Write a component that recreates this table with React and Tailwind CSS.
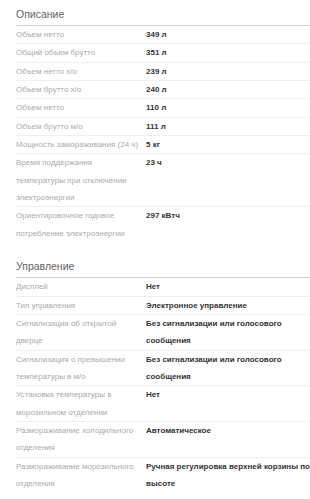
const description = [
  ['Объем нетто', '349 л'],
  ['Общий объем брутто', '351 л'],
  ['Объем нетто х/о', '239 л'],
  ['Объем брутто х/о', '240 л'],
  ['Объем нетто', '110 л'],
  ['Объем брутто м/о', '111 л'],
  ['Мощность замораживания (24 ч)', '5 кг'],
  ['Время поддержания температуры при отключении электроэнергии', '23 ч'],
  ['Ориентировочное годовое потребление электроэнергии', '297 кВтч'],
];

const control = [
  ['Дисплей', 'Нет'],
  ['Тип управления', 'Электронное управление'],
  ['Сигнализация об открытой дверце', 'Без сигнализации или голосового сообщения'],
  ['Сигнализация о превышении температуры в м/о', 'Без сигнализации или голосового сообщения'],
  ['Установка температуры в морозильном отделении', 'Нет'],
  ['Размораживание холодильного отделения', 'Автоматическое'],
  ['Размораживание морозильного отделения', 'Ручная регулировка верхней корзины по высоте'],
];

function SpecSection({ title, rows }) {
  return (
    <section>
      <h2 className="border-b border-[#cfcfcf] pt-[8px] pb-[4px] text-[10.5px] leading-[13px] font-normal text-[#636363]">
        {title}
      </h2>
      <div>
        {rows.map(([label, value], i) => (
          <div
            key={i}
            className={`flex text-[8px] leading-[17.33px] ${i < rows.length - 1 ? 'border-b border-[#efefef]' : ''}`}
          >
            <div className="w-[130px] shrink-0 pr-[7px] text-[#ababab]">{label}</div>
            <div className="flex-1 font-bold text-[#333]">{value}</div>
          </div>
        ))}
      </div>
    </section>
  );
}

export default function App() {
  return (
    <div className="flex min-h-[499px] w-[310px] flex-col gap-[10.4px] bg-white pl-4 font-['Liberation_Sans',Arial,sans-serif]">
      <SpecSection title="Описание" rows={description} />
      <SpecSection title="Управление" rows={control} />
    </div>
  );
}
